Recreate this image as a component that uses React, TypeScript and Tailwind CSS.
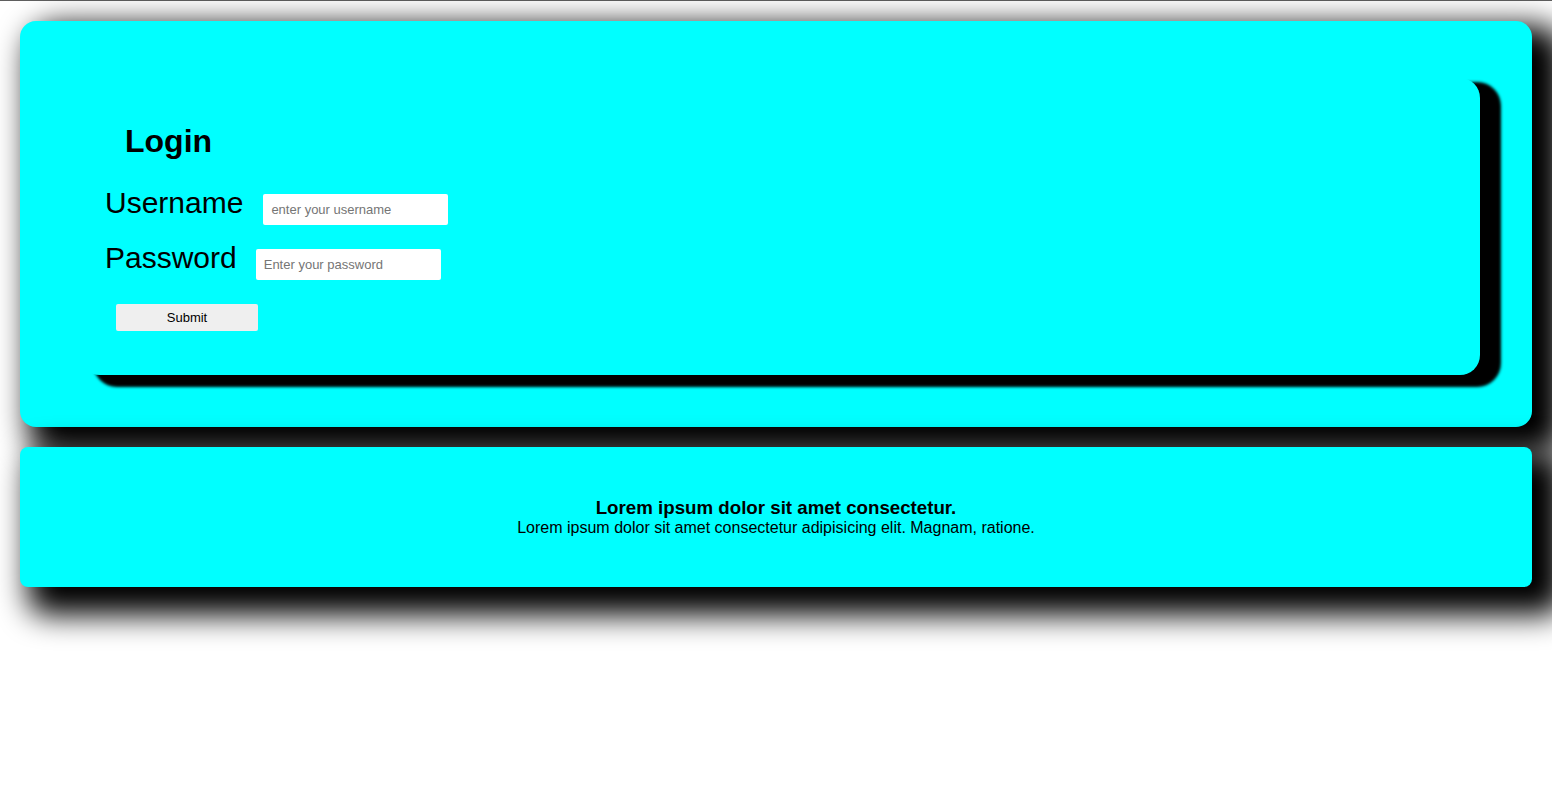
import React from 'react';

export default function App() {
  return (
    <div className="min-h-[790px] bg-white font-['Liberation_Sans',Arial,sans-serif] text-black">
      <div className="h-px bg-[#5f5f5f]" />
      <div className="flex flex-col gap-5 px-5 pt-5">
        {/* login card */}
        <section className="rounded-2xl bg-[#00ffff] pt-[57px] pl-[60px] pr-[52px] pb-[52px] shadow-[20px_16px_30px_12px_black]">
          <div className="h-[297px] rounded-[20px] bg-[#00ffff] pl-[25px] pt-[45px] shadow-[17px_8px_3px_4px_black]">
            <h1 className="ml-[20px] text-[32px] font-bold leading-[37px]">Login</h1>
            <form className="flex flex-col" onSubmit={(e) => e.preventDefault()}>
              <div className="mt-[20px] flex items-center">
                <label className="text-[30px] leading-[34px]">Username</label>
                <input
                  type="text"
                  placeholder="enter your username"
                  className="ml-[20px] mt-[14px] h-[31px] w-[185px] rounded-[2px] bg-white px-2 text-[13px] placeholder:text-[#757575] outline-none"
                />
              </div>
              <div className="mt-[10px] flex items-center">
                <label className="text-[30px] leading-[34px]">Password</label>
                <input
                  type="password"
                  placeholder="Enter your password"
                  className="ml-[19px] mt-[14px] h-[31px] w-[185px] rounded-[2px] bg-white px-2 text-[13px] placeholder:text-[#757575] outline-none"
                />
              </div>
              <button
                type="submit"
                className="ml-[11px] mt-[24px] h-[27px] w-[142px] rounded-[2px] bg-[#efefef] text-[13px]"
              >
                Submit
              </button>
            </form>
          </div>
        </section>

        {/* info card */}
        <section className="flex h-[140px] flex-col items-center justify-center rounded-lg bg-[#00ffff] text-center shadow-[20px_16px_30px_12px_black]">
          <h3 className="text-[18.72px] font-bold leading-[20px]">Lorem ipsum dolor sit amet consectetur.</h3>
          <p className="text-[16px] leading-[19px]">Lorem ipsum dolor sit amet consectetur adipisicing elit. Magnam, ratione.</p>
        </section>
      </div>
    </div>
  );
}
